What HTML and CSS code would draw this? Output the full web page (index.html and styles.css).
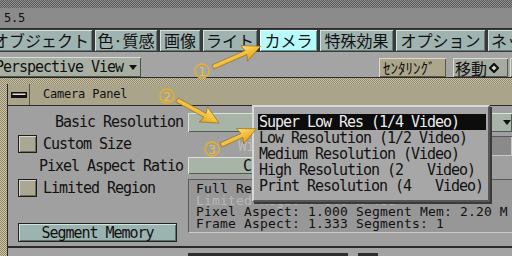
FILE: index.html
```html
<!DOCTYPE html>
<html lang="ja">
<head>
<meta charset="utf-8">
<title>Camera Panel</title>
<link rel="stylesheet" href="styles.css">
</head>
<body>
<div class="app">
  <div class="frame-top"></div>
  <header class="titlebar">5.5</header>
  <nav class="tabs">
    <span class="tab tab-obj">オブジェクト</span>
    <span class="tab tab-color">色·質感</span>
    <span class="tab tab-image">画像</span>
    <span class="tab tab-light">ライト</span>
    <span class="tab tab-camera is-active">カメラ</span>
    <span class="tab tab-fx">特殊効果</span>
    <span class="tab tab-opt">オプション</span>
    <span class="tab tab-net">ネットワーク</span>
  </nav>
  <div class="toolbar">
    <button class="view-select">Perspective View<span class="caret"></span></button>
    <div class="tool-group">
      <button class="tool tool-center">ｾﾝﾀﾘﾝｸﾞ</button>
      <button class="tool tool-move">移動<svg class="diamond" width="10" height="10" viewBox="0 0 10 10"><polygon points="5,1 9,5 5,9 1,5" fill="#d8d8d0" stroke="#111" stroke-width="2.2"/></svg></button>
      <button class="tool tool-more">回転</button>
    </div>
  </div>
  <div class="workspace">
    <section class="panel">
      <div class="panel-title">
        <span class="panel-icon"><svg width="16" height="6" viewBox="0 0 16 6"><rect x="0.5" y="0.5" width="15" height="5" fill="#111" stroke="#111"/><rect x="1.5" y="1.5" width="13" height="1.5" fill="#e4e0cc"/></svg></span>
        <span class="panel-name">Camera Panel</span>
      </div>
      <div class="panel-body">
        <span class="field-label">Basic Resolution</span>
        <div class="dropdown dropdown-res"><span class="dropdown-text">Super Low Res (1/4 Video)</span><span class="caret"></span></div>

        <div class="check-row"><span class="checkbox"></span>Custom Size</div>
        <div class="size-row"><span class="dim-label">Width</span><span class="dim-field"></span></div>

        <span class="field-label">Pixel Aspect Ratio</span>
        <div class="dropdown dropdown-aspect">Custom</div>

        <div class="check-row"><span class="checkbox"></span>Limited Region</div>
        <div class="info-box">
          <div class="info-line">Full Resolution: 640 x 486</div>
          <div class="info-line is-disabled">Limited Region: 640 x 486</div>
          <div class="info-line">Pixel Aspect: 1.000 Segment Mem: 2.20 M</div>
          <div class="info-line">Frame Aspect: 1.333 Segments: 1</div>
        </div>

        <button class="seg-button">Segment Memory</button>
      </div>
      <div class="panel-foot"><span class="foot-box foot-wide"></span><span class="foot-box foot-small"></span></div>
    </section>
  </div>

  <ul class="popup">
    <li class="popup-item is-selected">Super Low Res (1/4 Video)</li>
    <li class="popup-item">Low Resolution (1/2 Video)</li>
    <li class="popup-item">Medium Resolution (Video)</li>
    <li class="popup-item">High Resolution (2   Video)</li>
    <li class="popup-item">Print Resolution (4   Video)</li>
  </ul>

  <svg class="annotations" width="512" height="256" viewBox="0 0 512 256">
    <defs>
      <linearGradient id="arrowFill" x1="0" y1="0" x2="0" y2="1">
        <stop offset="0" stop-color="#ffe070"/>
        <stop offset="1" stop-color="#e8a010"/>
      </linearGradient>
    </defs>
    <g transform="translate(213,67) rotate(-23.6)">
      <path d="M0,-2.2 L36,-2.2 L34,-8.5 L52,0 L34,8.5 L36,2.2 L0,2.2 Z" fill="url(#arrowFill)" stroke="#8a6a18" stroke-width="0.6"/>
    </g>
    <g transform="translate(177,100) rotate(28.7)">
      <path d="M0,-2.2 L32,-2.2 L30,-8.5 L48,0 L30,8.5 L32,2.2 L0,2.2 Z" fill="url(#arrowFill)" stroke="#8a6a18" stroke-width="0.6"/>
    </g>
    <g transform="translate(221,145) rotate(-24.6)">
      <path d="M0,-2.2 L23,-2.2 L21,-8.5 L39,0 L21,8.5 L23,2.2 L0,2.2 Z" fill="url(#arrowFill)" stroke="#8a6a18" stroke-width="0.6"/>
    </g>
    <g class="badge">
      <circle cx="202" cy="71" r="7" fill="none" stroke="#e8b028" stroke-width="1.5"/>
      <text x="202" y="75.5" text-anchor="middle">1</text>
    </g>
    <g class="badge">
      <circle cx="167" cy="96" r="7" fill="none" stroke="#e8b028" stroke-width="1.5"/>
      <text x="167" y="100.5" text-anchor="middle">2</text>
    </g>
    <g class="badge">
      <circle cx="212" cy="149" r="7" fill="none" stroke="#e8b028" stroke-width="1.5"/>
      <text x="212" y="153.5" text-anchor="middle">3</text>
    </g>
  </svg>
</div>
</body>
</html>
```
FILE: styles.css
```css
* { box-sizing: border-box; }

html, body {
  margin: 0;
  padding: 0;
}

body {
  width: 512px;
  height: 256px;
  overflow: hidden;
  background: #a1a1a1;
  color: #111;
  font-family: "DejaVu Sans Mono", "Liberation Mono", monospace;
}

.app {
  position: relative;
  width: 512px;
  height: 256px;
  overflow: hidden;
  display: flex;
  flex-direction: column;
}

/* window chrome */
.frame-top {
  flex: none;
  height: 8px;
  background: repeating-conic-gradient(#5c5c5c 0 25%, #8e8e8e 0 50%) 0 0 / 2px 2px;
}

.titlebar {
  flex: none;
  height: 21px;
  padding-left: 4px;
  background: #8b8b8b;
  border-bottom: 1px solid #2a2a2a;
  font-size: 12px;
  line-height: 20px;
  letter-spacing: -0.2px;
}

/* menu tabs */
.tabs {
  flex: none;
  display: flex;
  gap: 3px;
  height: 23px;
  padding: 1px 0;
  background: #3a3a3a;
  overflow: hidden;
}

.tab {
  flex: none;
  height: 21px;
  background: #9fb3b0;
  box-shadow: inset 1px 1px #d4e2e0, inset -1px -1px #687876;
  font-family: "Noto Sans CJK JP", sans-serif;
  font-size: 16px;
  line-height: 21px;
  text-align: center;
  white-space: nowrap;
  overflow: hidden;
  color: #111;
}

.tab.is-active { background: #b6fafa; box-shadow: inset 1px 1px #e8ffff, inset -1px -1px #6a9a9a; }

.tab-obj { width: 100px; margin-left: -8px; text-align: right; padding-right: 3px; }
.tab-color { width: 62px; }
.tab-image { width: 40px; }
.tab-light { width: 54px; }
.tab-camera { width: 57px; }
.tab-fx { width: 73px; }
.tab-opt { width: 89px; }
.tab-net { width: 90px; text-align: left; padding-left: 3px; }

/* toolbar */
.toolbar {
  flex: none;
  display: flex;
  align-items: flex-end;
  height: 26px;
  background: #a4a4a4;
  border-bottom: 1px solid #2a2a2a;
  overflow: hidden;
}

.view-select {
  flex: none;
  display: flex;
  align-items: center;
  width: 149px;
  height: 20px;
  margin: 0 0 0 -8px;
  padding: 0 0 0 3px;
  border: none;
  background: #a8b0a4;
  box-shadow: inset 1px 1px #d8dcd4, inset -1px -1px #4e524a;
  color: #111;
  font-family: "DejaVu Sans Mono", monospace;
  font-size: 15px;
  letter-spacing: -1.03px;
}

.caret {
  display: inline-block;
  width: 0;
  height: 0;
  margin-left: 6px;
  border-left: 4.5px solid transparent;
  border-right: 4.5px solid transparent;
  border-top: 5px solid #111;
}

.tool-group {
  flex: none;
  display: flex;
  gap: 7px;
  margin-left: 238px;
}

.tool {
  flex: none;
  height: 19px;
  margin: 0;
  border: none;
  color: #111;
  font-family: "Noto Sans CJK JP", sans-serif;
  white-space: nowrap;
  display: flex;
  align-items: center;
}

.tool-center {
  width: 67px;
  padding: 0 0 0 4px;
  background: #aba68c;
  box-shadow: inset 1px 1px #dedac4, inset -1px -1px #5c5844;
  font-size: 15px;
}

.tool-move {
  width: 55px;
  padding: 0 0 0 2px;
  background: #a6aba2;
  box-shadow: inset 1px 1px #d8dcd4, inset -1px -1px #54584e;
  font-size: 16px;
}

.diamond { margin-left: 2px; }

.tool-more {
  width: 50px;
  margin-left: -5px;
  padding: 0 0 0 4px;
  background: #a6aba2;
  box-shadow: inset 1px 1px #d8dcd4, inset -1px -1px #54584e;
  font-size: 16px;
}

/* workspace */
.workspace {
  flex: 1;
  display: flex;
  padding: 6px 0 0 7px;
  background: repeating-conic-gradient(#cbc3a3 0 25%, #8d876f 0 50%) 0 0 / 2px 2px;
  min-height: 0;
}

.panel {
  flex: 1;
  display: flex;
  flex-direction: column;
  border-left: 1px solid #2a2a2a;
  background: repeating-conic-gradient(#a3a3a3 0 25%, #9d9d9d 0 50%) 0 0 / 2px 2px;
}

.panel-title {
  flex: none;
  display: flex;
  height: 22px;
  background: #aaa48a;
  border-bottom: 1px solid #2a2a2a;
}

.panel-icon {
  width: 22px;
  display: flex;
  align-items: center;
  justify-content: center;
  border-right: 1px solid #5c5844;
}

.panel-name {
  padding-left: 13px;
  font-size: 12px;
  line-height: 21px;
  letter-spacing: -0.2px;
}

.panel-body {
  flex: none;
  display: grid;
  grid-template-columns: 180px 1fr;
  grid-template-rows: 22px 22px 22px 44px 19px;
  height: 140px;
  padding-top: 7px;
  font-size: 15px;
  letter-spacing: -1.03px;
}

.field-label {
  align-self: start;
  text-align: right;
  padding-right: 5px;
  line-height: 18px;
  white-space: nowrap;
}

.dropdown {
  align-self: start;
  display: flex;
  align-items: center;
  background: #a8b4a7;
  box-shadow: inset 1px 1px #dce4da, inset -1px -1px #525c51;
  white-space: nowrap;
  overflow: hidden;
}

.dropdown-res {
  height: 19px;
  padding-left: 80px;
}

.dropdown-res .caret { margin-left: auto; margin-right: 1px; }

.dropdown-aspect {
  width: 150px;
  height: 17px;
  padding-left: 55px;
}

.check-row {
  align-self: start;
  display: flex;
  align-items: center;
  gap: 6px;
  height: 18px;
  padding-left: 10px;
  white-space: nowrap;
}

.checkbox {
  flex: none;
  width: 19px;
  height: 18px;
  background: #aaa892;
  border: 1px solid #1c1c1c;
  box-shadow: inset 1px 1px #d8d6c4, inset -1px -1px #6c6a5a;
}

.size-row {
  display: flex;
  align-items: center;
  height: 22px;
  padding-left: 50px;
}

.dim-label { color: #bcbcbc; }

.dim-field {
  margin-left: auto;
  width: 60px;
  height: 20px;
  background: #8a8a8a;
  box-shadow: inset 1px 1px #5a5a5a, inset -1px -1px #c8c8c8;
}

.info-box {
  grid-row: span 2;
  align-self: start;
  height: 54px;
  padding: 3px 0 0 7px;
  background: #979797;
  border-top: 1px solid #5a5a5a;
  border-left: 1px solid #5a5a5a;
  border-bottom: 1px solid #cacaca;
  font-size: 13px;
  letter-spacing: 0.17px;
  overflow: hidden;
}

.info-line {
  height: 11.7px;
  line-height: 11.7px;
  white-space: nowrap;
}

.info-line.is-disabled { color: #b8b8b8; }

.seg-button {
  align-self: start;
  width: 159px;
  height: 19px;
  margin: 0 0 0 10px;
  padding: 0;
  border: 1px solid #222;
  background: #9cb4b0;
  box-shadow: inset 1px 1px #d2e2e0, inset -1px -1px #5e706c;
  color: #111;
  font-family: "DejaVu Sans Mono", monospace;
  font-size: 15px;
  letter-spacing: -1.03px;
  line-height: 16px;
}

.panel-foot {
  flex: 1;
  display: flex;
  gap: 10px;
  padding: 5px 0 0 180px;
  border-top: 2px solid #2a2a2a;
  background: #a3a3a3;
}

.foot-box {
  height: 10px;
  background: #2e2e2e;
}

.foot-wide { width: 160px; }
.foot-small { width: 20px; }

/* popup menu */
.popup {
  position: absolute;
  left: 252px;
  top: 105px;
  width: 238px;
  height: 97px;
  margin: 0;
  padding: 7px 2px 0 4px;
  list-style: none;
  background: #a7a7a7;
  border-top: 2px solid #d8d8d8;
  border-left: 2px solid #d8d8d8;
  border-right: 2px solid #565656;
  border-bottom: 2px solid #565656;
  box-shadow: 2px 2px 0 #3a3a3a;
  font-size: 15px;
  letter-spacing: -1.03px;
}

.popup-item {
  height: 16px;
  padding-left: 1px;
  line-height: 16px;
  white-space: pre;
  overflow: hidden;
}

.popup-item.is-selected {
  background: #0c0c0c;
  color: #ececec;
}

/* annotations */
.annotations {
  position: absolute;
  left: 0;
  top: 0;
  pointer-events: none;
}

.badge text {
  font-family: "DejaVu Sans", sans-serif;
  font-size: 12px;
  fill: #f0c040;
}
```
